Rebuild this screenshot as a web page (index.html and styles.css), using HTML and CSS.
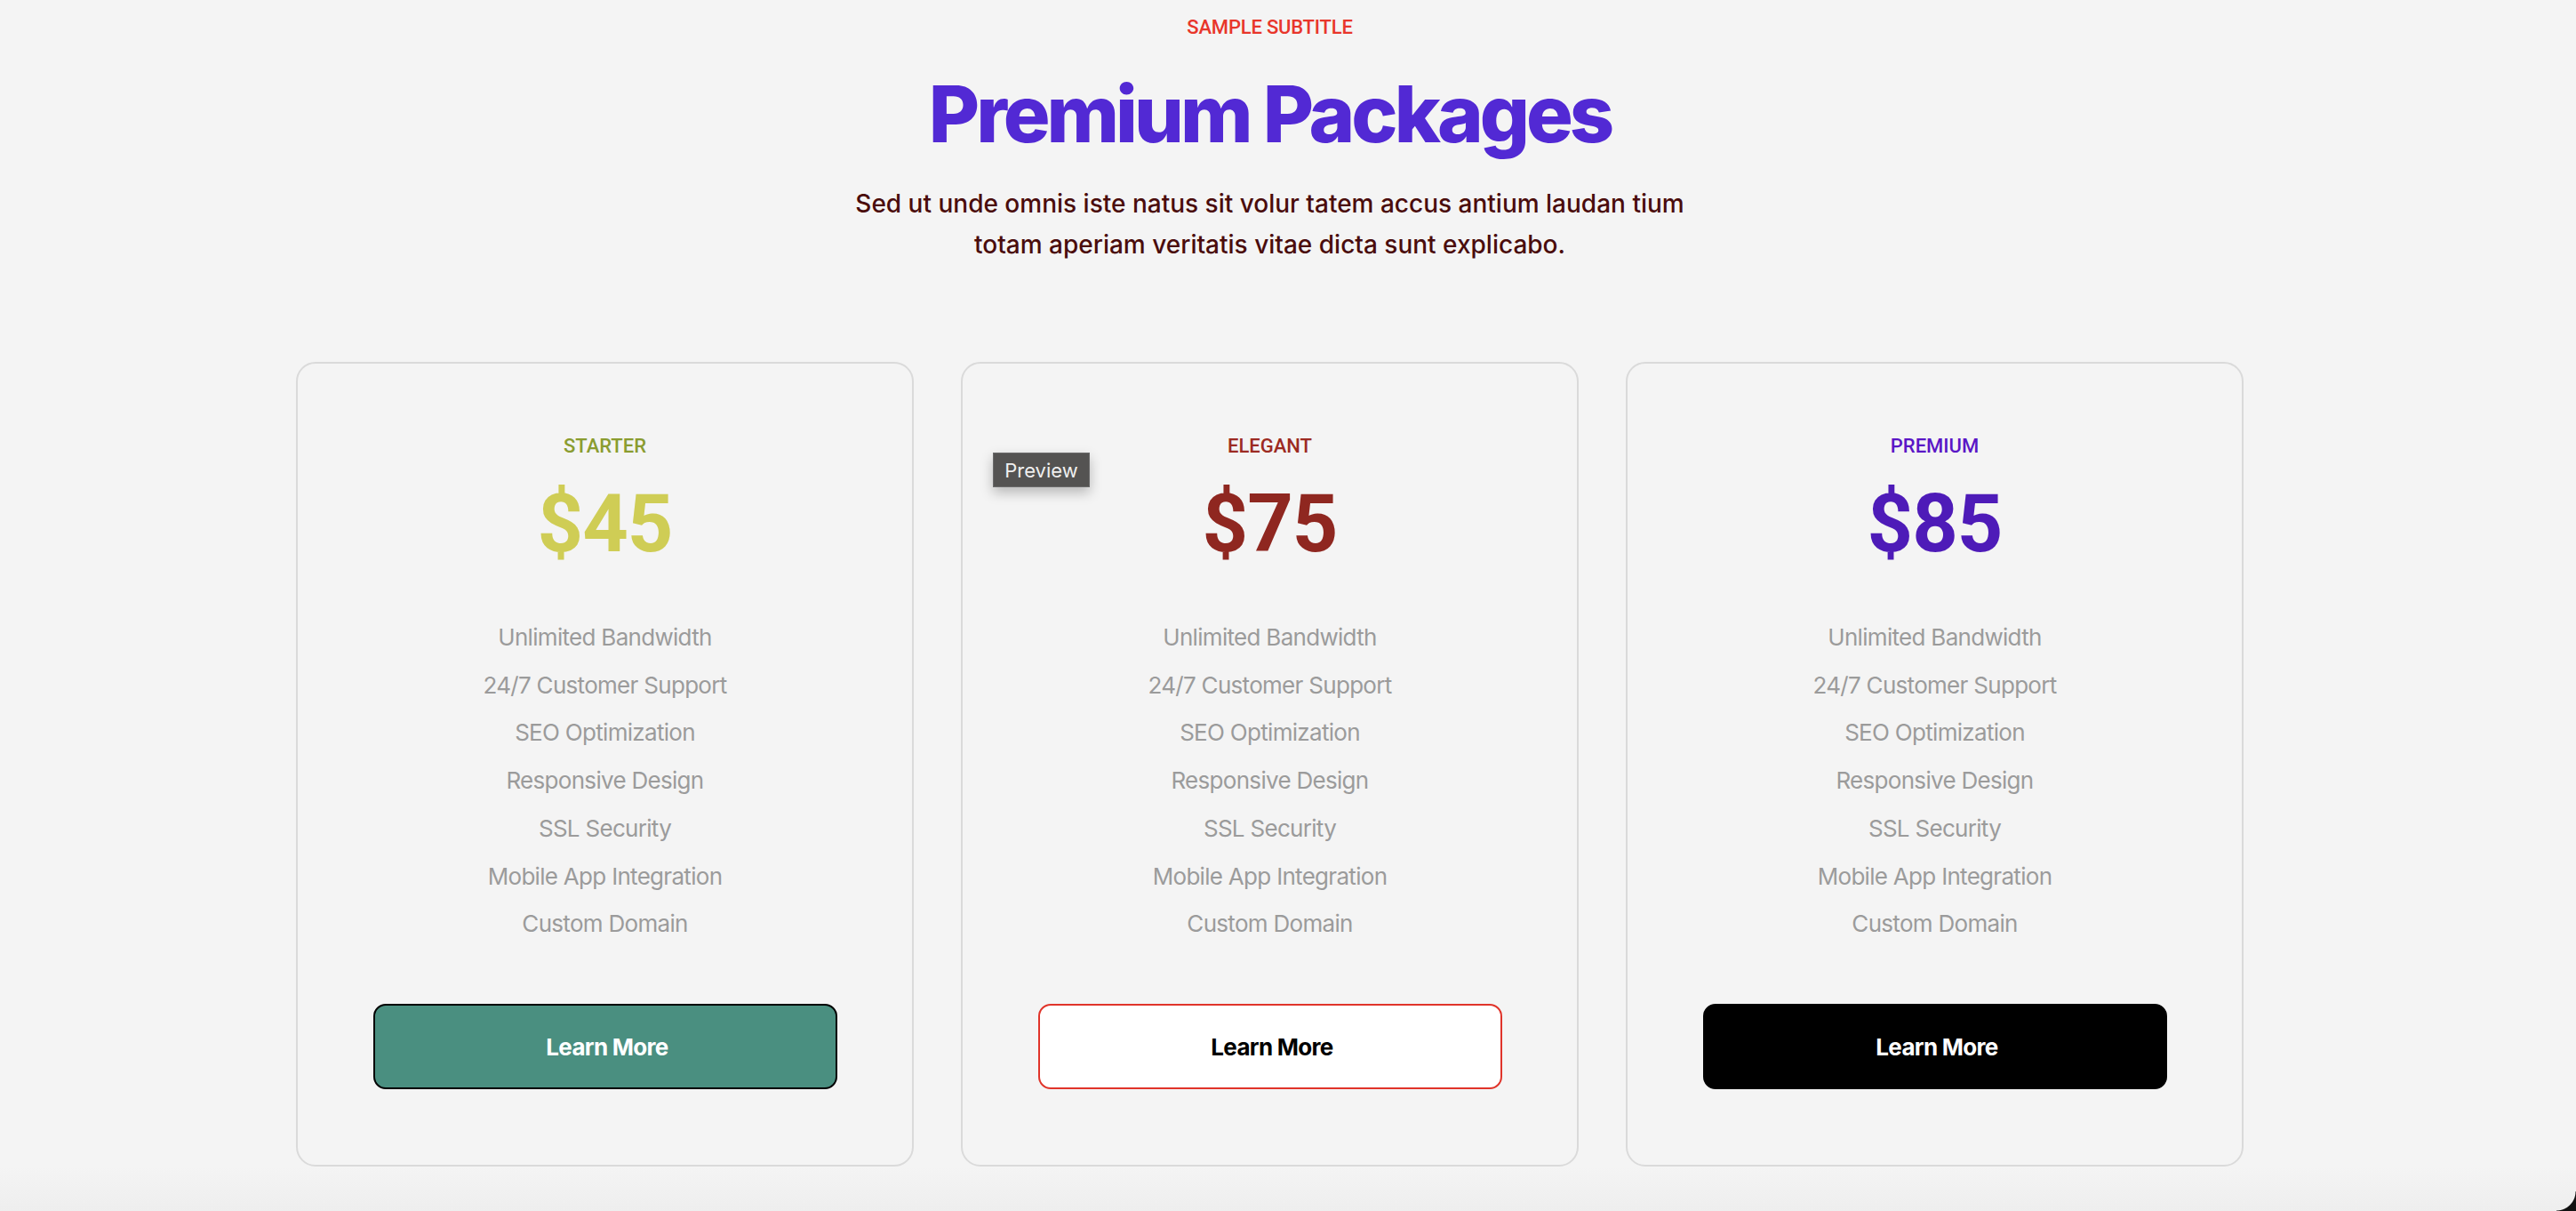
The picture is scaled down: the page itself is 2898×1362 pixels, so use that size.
FILE: index.html
```html
<!DOCTYPE html>
<html lang="en">
<head>
<meta charset="utf-8">
<title>Premium Packages</title>
<link rel="stylesheet" href="styles.css">
</head>
<body>
<div class="page">
  <header class="intro">
    <p class="subtitle">SAMPLE SUBTITLE</p>
    <h1 class="title">Premium Packages</h1>
    <p class="lead">Sed ut unde omnis iste natus sit volur tatem accus antium laudan tium<br>totam aperiam veritatis vitae dicta sunt explicabo.</p>
  </header>

  <section class="plans">
    <article class="card">
      <p class="plan-name plan-starter">STARTER</p>
      <p class="price price-starter">$45</p>
      <ul class="features">
        <li>Unlimited Bandwidth</li>
        <li>24/7 Customer Support</li>
        <li>SEO Optimization</li>
        <li>Responsive Design</li>
        <li>SSL Security</li>
        <li>Mobile App Integration</li>
        <li>Custom Domain</li>
      </ul>
      <a class="btn btn-green" href="#">Learn More</a>
    </article>

    <article class="card">
      <span class="tooltip">Preview</span>
      <p class="plan-name plan-elegant">ELEGANT</p>
      <p class="price price-elegant">$75</p>
      <ul class="features">
        <li>Unlimited Bandwidth</li>
        <li>24/7 Customer Support</li>
        <li>SEO Optimization</li>
        <li>Responsive Design</li>
        <li>SSL Security</li>
        <li>Mobile App Integration</li>
        <li>Custom Domain</li>
      </ul>
      <a class="btn btn-outline" href="#">Learn More</a>
    </article>

    <article class="card">
      <p class="plan-name plan-premium">PREMIUM</p>
      <p class="price price-premium">$85</p>
      <ul class="features">
        <li>Unlimited Bandwidth</li>
        <li>24/7 Customer Support</li>
        <li>SEO Optimization</li>
        <li>Responsive Design</li>
        <li>SSL Security</li>
        <li>Mobile App Integration</li>
        <li>Custom Domain</li>
      </ul>
      <a class="btn btn-black" href="#">Learn More</a>
    </article>
  </section>
</div>
<div class="corner"></div>
</body>
</html>
```
FILE: styles.css
```css
* { box-sizing: border-box; }

html, body {
  margin: 0;
  padding: 0;
  height: 100%;
}

body {
  background: linear-gradient(to bottom, #f4f4f4 0, #f4f4f4 1312px, #eeeeee 1362px);
  font-family: Inter, "Noto Sans", sans-serif;
  overflow: hidden;
}

.page {
  width: 2857px;
  padding-top: 18px;
  display: flex;
  flex-direction: column;
  align-items: center;
}

.intro {
  display: flex;
  flex-direction: column;
  align-items: center;
  text-align: center;
}

.subtitle {
  margin: 0;
  font-family: Roboto, sans-serif;
  font-size: 22px;
  line-height: 26px;
  font-weight: 500;
  color: #e8362b;
  letter-spacing: -0.2px;
}

.title {
  margin: 31px 0 0;
  font-size: 88px;
  line-height: 106px;
  font-weight: 800;
  color: #5229d4;
  letter-spacing: -4px;
}

.lead {
  margin: 25px 0 0;
  font-size: 28px;
  line-height: 46px;
  font-weight: 500;
  color: #4a0c0c;
  letter-spacing: 0;
}

.plans {
  margin-top: 109px;
  display: grid;
  grid-template-columns: repeat(3, 695px);
  column-gap: 53px;
}

.card {
  position: relative;
  height: 905px;
  border: 2px solid #dadada;
  border-radius: 22px;
  padding: 80px 85px 85px;
  display: flex;
  flex-direction: column;
  align-items: center;
  text-align: center;
}

.plan-name {
  margin: 0;
  font-family: Roboto, sans-serif;
  font-size: 22px;
  line-height: 26px;
  font-weight: 500;
}
.plan-starter { color: #8a9c30; }
.plan-elegant { color: #9c2a22; }
.plan-premium { color: #5a16c6; }

.price {
  margin: 25px 0 0;
  font-family: Roboto, sans-serif;
  font-size: 90px;
  line-height: 100px;
  font-weight: 700;
  letter-spacing: -1px;
}
.price-starter { color: #cfcd55; }
.price-elegant { color: #8f2720; }
.price-premium { color: #4e1bb8; }

.features {
  list-style: none;
  margin: 50px 0 0;
  padding: 0;
  font-size: 26px;
  line-height: 53.7px;
  color: #9b9b9b;
  letter-spacing: -0.7px;
}

.btn {
  margin-top: 63px;
  width: 522px;
  height: 96px;
  border-radius: 14px;
  display: flex;
  align-items: center;
  justify-content: center;
  padding: 2px 0 0 5px;
  font-size: 26px;
  font-weight: 700;
  letter-spacing: -0.7px;
  text-decoration: none;
  border: 2px solid transparent;
}
.btn-green { background: #4a8f80; border-color: #000; color: #fff; }
.btn-outline { background: #fff; border-color: #e0342a; color: #000; }
.btn-black { background: #000; border-color: #000; color: #fff; }

.tooltip {
  position: absolute;
  left: 34px;
  top: 100px;
  width: 109px;
  height: 39px;
  display: flex;
  align-items: center;
  justify-content: center;
  background: #545352;
  color: #efefef;
  font-size: 22px;
  border: 1px solid #6a6a6a;
  box-shadow: 0 6px 14px rgba(0, 0, 0, 0.25);
}

.corner {
  position: fixed;
  right: 0;
  bottom: 0;
  width: 22px;
  height: 22px;
  background: radial-gradient(circle at 0 0, transparent 21px, #111 22px);
}
```
